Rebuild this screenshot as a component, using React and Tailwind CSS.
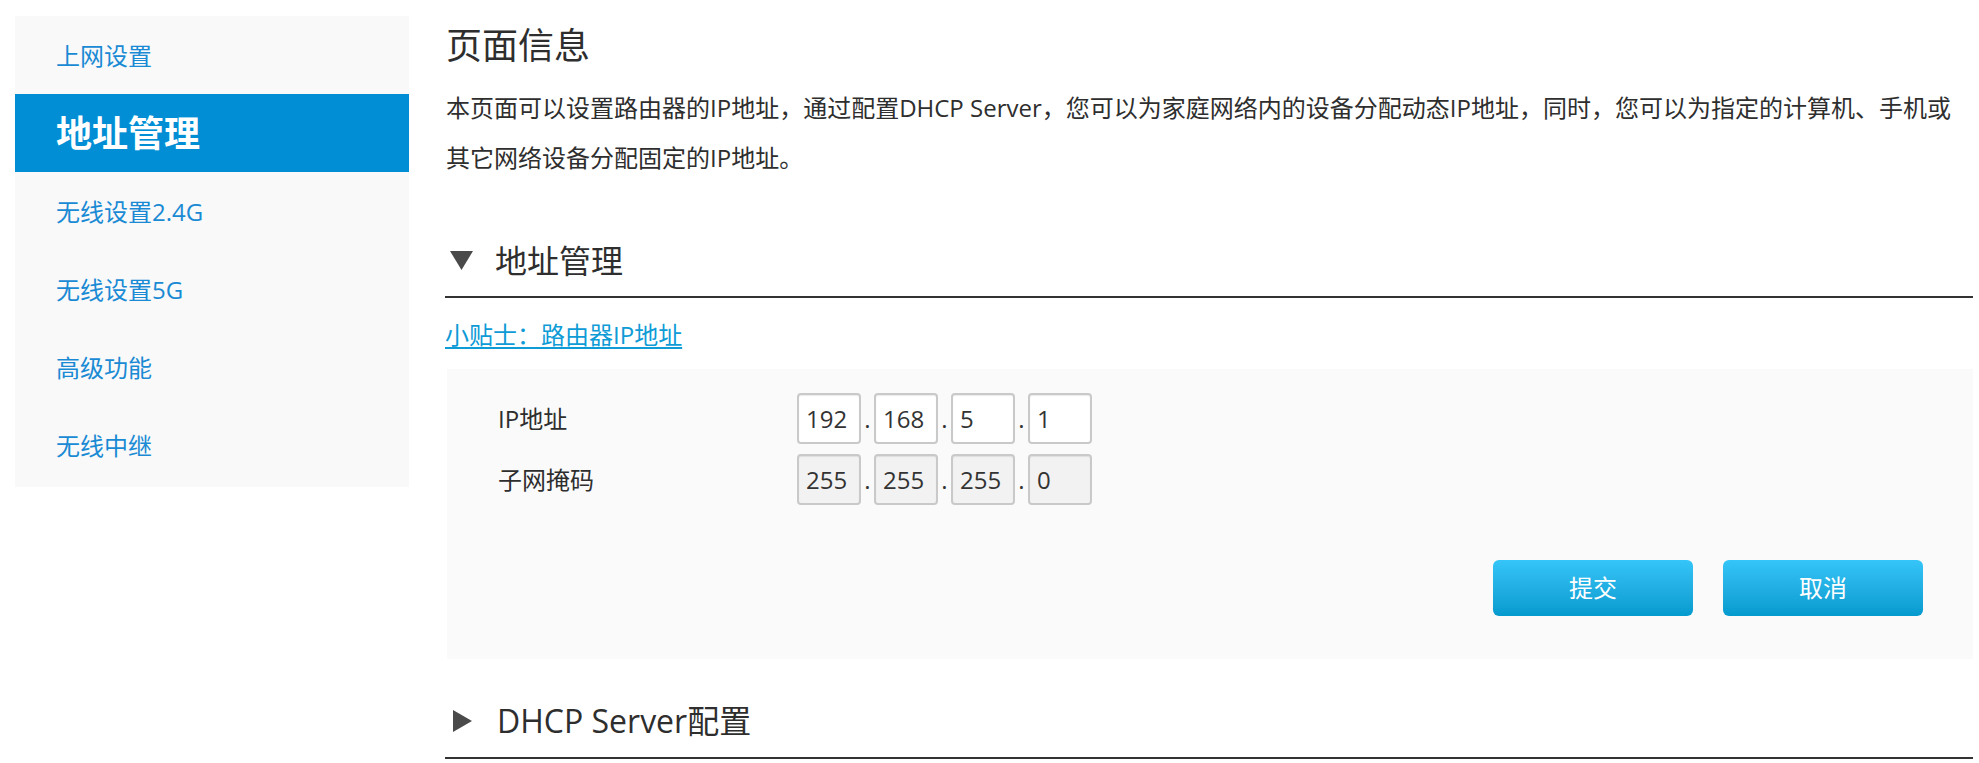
import React from "react";

const FONT = { fontFamily: '"Open Sans", "Noto Sans CJK SC", sans-serif' };

const navItems = [
  { label: "上网设置" },
  { label: "地址管理", active: true },
  { label: "无线设置2.4G" },
  { label: "无线设置5G" },
  { label: "高级功能" },
  { label: "无线中继" },
];

function Octets({ values, readOnly }) {
  return (
    <div className="flex items-center">
      {values.map((v, i) => (
        <React.Fragment key={i}>
          {i > 0 && (
            <span className="w-[13px] text-center text-[24px] leading-[51px] text-[#333]">.</span>
          )}
          <input
            readOnly={readOnly}
            defaultValue={v}
            style={FONT}
            className={
              "w-[64px] h-[51px] px-[7px] text-[24px] text-[#333] rounded-[4px] border-2 border-[#c9c9c9] outline-none shadow-[inset_0_1px_1px_rgba(0,0,0,0.08)] " +
              (readOnly ? "bg-[#f2f2f2]" : "bg-white")
            }
          />
        </React.Fragment>
      ))}
    </div>
  );
}

function TriangleDown() {
  return (
    <svg width="23" height="20" viewBox="0 0 23 20" className="shrink-0">
      <polygon points="0,0 23,0 11.5,19" fill="#4a4a4a" />
    </svg>
  );
}

function TriangleRight() {
  return (
    <svg width="20" height="22" viewBox="0 0 20 22" className="shrink-0">
      <polygon points="0,0 19,11 0,22" fill="#4a4a4a" />
    </svg>
  );
}

export default function App() {
  return (
    <div style={FONT} className="w-[1979px] h-[763px] bg-white flex pt-[16px] pl-[15px] pr-[6px] overflow-hidden">
      {/* Sidebar */}
      <div className="w-[394px] shrink-0 self-start bg-[#f9f9f9] pb-[3px]">
        {navItems.map((item) =>
          item.active ? (
            <div key={item.label} className="h-[78px] flex items-center pl-[41px] pt-[2px] bg-[#018ed5] text-white text-[36px] font-bold">
              {item.label}
            </div>
          ) : (
            <div key={item.label} className="h-[78px] flex items-center pl-[41px] pt-[2px] text-[#1a8ad4] text-[24px]">
              {item.label}
            </div>
          )
        )}
      </div>

      {/* Main */}
      <div className="flex-1 ml-[36px] pt-[6px] text-[#2e2e2e]">
        <h1 className="text-[36px] leading-[48px] pl-[1px]">页面信息</h1>
        <p className="mt-[13px] text-[24px] leading-[50px] pl-[1px]">
          本页面可以设置路由器的IP地址，通过配置DHCP Server，您可以为家庭网络内的设备分配动态IP地址，同时，您可以为指定的计算机、手机或
          <br />
          其它网络设备分配固定的IP地址。
        </p>

        {/* Section header */}
        <div className="mt-[52px] h-[63px] pb-[10px] border-b-2 border-[#333] flex items-center">
          <div className="pl-[5px] w-[50px]">
            <TriangleDown />
          </div>
          <span className="text-[32px]">地址管理</span>
        </div>

        <a href="#" className="mt-[22px] inline-block text-[24px] leading-[30px] text-[#0e9bd6] underline underline-offset-[3px]">
          小贴士：路由器IP地址
        </a>

        {/* Panel */}
        <div className="mt-[19px] ml-[2px] bg-[#fafafa] pt-[24px] pb-[43px] pr-[50px]">
          <div className="flex items-center pl-[51px]">
            <span className="w-[299px] text-[24px]">IP地址</span>
            <Octets values={["192", "168", "5", "1"]} />
          </div>
          <div className="flex items-center pl-[51px] mt-[10px]">
            <span className="w-[299px] text-[24px]">子网掩码</span>
            <Octets values={["255", "255", "255", "0"]} readOnly />
          </div>
          <div className="flex justify-end gap-[30px] mt-[55px]">
            <button style={FONT} className="w-[200px] h-[56px] rounded-[6px] bg-gradient-to-b from-[#35c5f8] to-[#039ace] text-white text-[24px]">
              提交
            </button>
            <button style={FONT} className="w-[200px] h-[56px] rounded-[6px] bg-gradient-to-b from-[#35c5f8] to-[#039ace] text-white text-[24px]">
              取消
            </button>
          </div>
        </div>

        {/* DHCP header */}
        <div className="mt-[37px] h-[63px] pb-[11px] border-b-2 border-[#333] flex items-center">
          <div className="pl-[8px] w-[52px]">
            <TriangleRight />
          </div>
          <span className="text-[32px]">DHCP Server配置</span>
        </div>
      </div>
    </div>
  );
}
